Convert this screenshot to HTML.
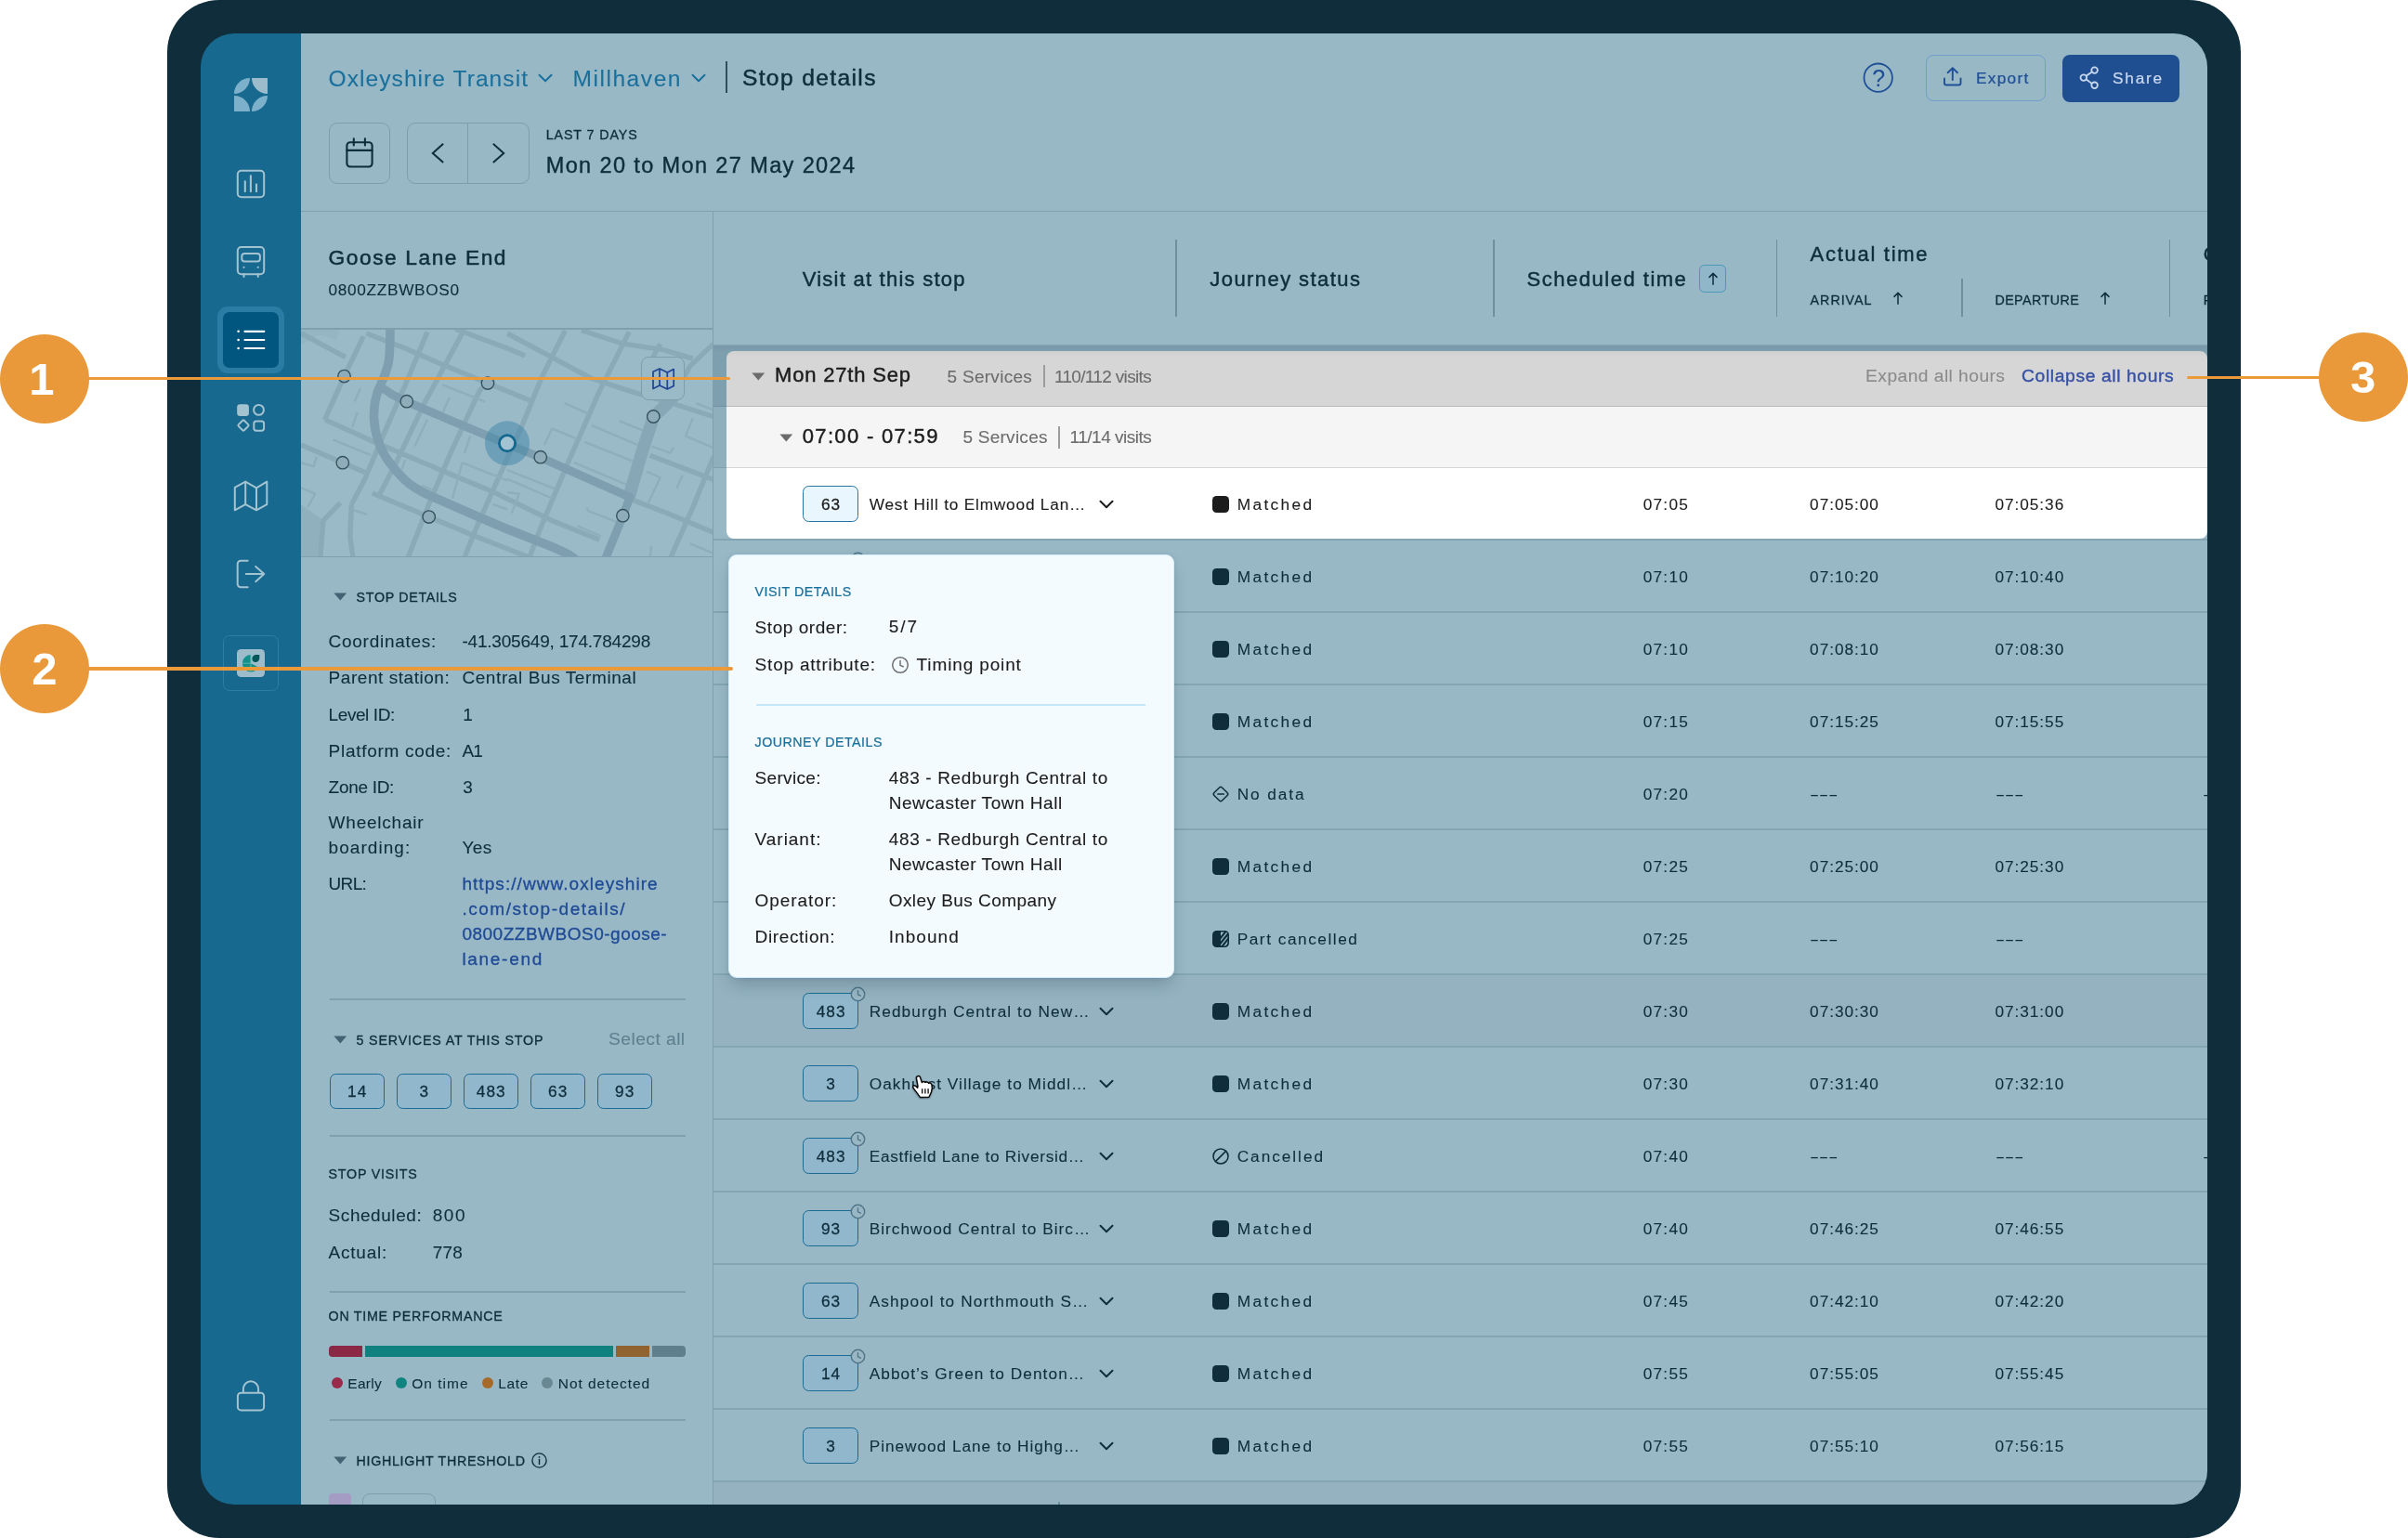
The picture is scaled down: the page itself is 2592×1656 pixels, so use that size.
<!DOCTYPE html>
<html lang="en"><head><meta charset="utf-8"><title>Stop details</title>
<style>
html,body{margin:0;padding:0;}
body{width:2592px;height:1656px;position:relative;overflow:hidden;background:#fff;font-family:'Liberation Sans',sans-serif;}
.b{position:absolute;display:block;}
.t{position:absolute;white-space:nowrap;line-height:1;font-family:'Liberation Sans',sans-serif;font-weight:400;-webkit-font-smoothing:antialiased;}
</style></head><body>
<div class="b" style="left:180px;top:0;width:2232px;height:1656px;background:#0f2d3b;border-radius:56px;"></div>
<div id="screen" class="b" style="left:0;top:0;width:2592px;height:1656px;clip-path:inset(36px 216px 36px 216px round 36px);will-change:transform;transform:translateZ(0);">
<div class="b" style="left:216.00px;top:36.00px;width:2160.00px;height:1584.00px;background:#99b8c6;"></div>
<div class="b" style="left:216.00px;top:36.00px;width:108.00px;height:1584.00px;background:#17698f;"></div>
<svg class="b" style="left:252.00px;top:84.00px;" width="36" height="36" viewBox="0 0 36 36"><path d="M17.0 0 A17.0 17.0 0 0 0 0 17.0 A17.0 17.0 0 0 0 17.0 0 Z" fill="#7db0ca"/><path d="M19.0 0 L36.0 0 L36.0 17.0 A17.0 17.0 0 0 1 19.0 0 Z" fill="#9dbccb"/><path d="M0 19.0 L0 36.0 L17.0 36.0 A17.0 17.0 0 0 0 0 19.0 Z" fill="#7db0ca"/><path d="M36.0 19.0 A17.0 17.0 0 0 0 19.0 36.0 A17.0 17.0 0 0 0 36.0 19.0 Z" fill="#7db0ca"/></svg>
<svg class="b" style="left:254.00px;top:182.00px;" width="32" height="32" viewBox="0 0 32 32"><g fill="none" stroke="#a4c3d1" stroke-width="2" stroke-linecap="round"><rect x="1.8" y="1.8" width="28.4" height="28.4" rx="4"/><path d="M9.8 13.2V24.2M15.9 7.3V24.2M22 16.6V24.2" stroke-width="2.1"/></g></svg>
<svg class="b" style="left:254.00px;top:264.00px;" width="32" height="36" viewBox="0 0 32 36"><g fill="none" stroke="#a4c3d1" stroke-width="2" stroke-linecap="round"><rect x="1.8" y="2" width="28.4" height="29.3" rx="4"/><rect x="6.3" y="9" width="19.6" height="8.4" rx="3"/><path d="M8.5 31.3V34M23.7 31.3V34"/></g><circle cx="8.5" cy="23.8" r="1.1" fill="#a4c3d1"/><circle cx="23.7" cy="23.8" r="1.1" fill="#a4c3d1"/></svg>
<div class="b" style="left:233.70px;top:330.00px;width:72.60px;height:72.30px;background:#2a7ca4;border-radius:11px;"></div>
<div class="b" style="left:239.70px;top:336.00px;width:60.40px;height:60.20px;background:#00567f;border-radius:7px;"></div>
<svg class="b" style="left:250.00px;top:350.00px;" width="40" height="32" viewBox="0 0 40 32"><g stroke="#fff" stroke-width="2.2" stroke-linecap="round"><path d="M13.5 6.8H34.3M13.5 16H34.3M13.5 25H34.3"/><path d="M6.6 6.8h0.01M6.6 16h0.01M6.6 25h0.01" stroke-width="2.6"/></g></svg>
<svg class="b" style="left:253.00px;top:433.00px;" width="34" height="34" viewBox="0 0 34 34"><rect x="2.2" y="2.3" width="12.7" height="12.7" rx="3.2" fill="#a4c3d1"/><g fill="none" stroke="#a4c3d1" stroke-width="2"><circle cx="25.5" cy="8.4" r="5.4"/><rect x="-4.3" y="-4.3" width="8.6" height="8.6" rx="1.2" transform="translate(9 25) rotate(45)"/><rect x="20.3" y="20.4" width="10.8" height="10.3" rx="2.6"/></g></svg>
<svg class="b" style="left:250.00px;top:515.00px;" width="40" height="38" viewBox="0 0 40 38"><g fill="none" stroke="#a4c3d1" stroke-width="2" stroke-linejoin="round"><path d="M2.8 9.8L14.2 3.6L26 10.3L37.3 3.6V28.1L26 34.3L14.2 28.1L2.8 34.3Z"/><path d="M14.2 3.6V28.1M26 10.3V34.3"/></g></svg>
<svg class="b" style="left:252.00px;top:600.00px;" width="36" height="36" viewBox="0 0 36 36"><g fill="none" stroke="#a4c3d1" stroke-width="2" stroke-linecap="round" stroke-linejoin="round"><path d="M14.7 3.8H7.2A3.5 3.5 0 0 0 3.7 7.3V28.8A3.5 3.5 0 0 0 7.2 32.3H14.7"/><path d="M12.8 18H32.3M23.2 9.9L32.3 18L23.2 26.2"/></g></svg>
<div class="b" style="left:240.00px;top:684.00px;width:60.00px;height:59.50px;border-radius:7px;border:1px solid #2d7da5;box-sizing:border-box;"></div>
<div class="b" style="left:255.00px;top:698.70px;width:30.20px;height:30.20px;background:#9cbccb;border-radius:4.5px;"></div>
<svg class="b" style="left:255.00px;top:698.70px;" width="30.2" height="30.2" viewBox="0 0 30.2 30.2"><path d="M15 6.100A9.200 9.200 0 1 0 23.300 19.400L15 15.200Z" fill="#12918b"/><path d="M16.400 10.200A4.200 4.200 0 0 1 20.600 6H24.300V9.700A4.200 4.200 0 0 1 20.100 13.900A3.700 3.700 0 0 1 16.400 10.200Z" fill="#03575a"/><path d="M14.900 6.100V24.400M5.800 15.200H14.900" stroke="#6dbdb6" stroke-width="0.8"/></svg>
<svg class="b" style="left:253.00px;top:1485.00px;" width="34" height="36" viewBox="0 0 34 36"><g fill="none" stroke="#a4c3d1" stroke-width="2"><rect x="2.9" y="14.8" width="28.2" height="18.6" rx="3.5"/><path d="M8.9 14.8V10.4A8.1 8.1 0 0 1 25.1 10.4V14.8"/></g></svg>
<span class="t" style="left:353.50px;top:73.00px;font-size:24.60px;color:#1a709c;letter-spacing:1.040px;-webkit-text-stroke:0.1px #1a709c;">Oxleyshire Transit</span>
<svg class="b" style="left:579.00px;top:79.00px;" width="16" height="10" viewBox="0 0 16 10"><path d="M1.5 1.8L8 8.2L14.5 1.8" fill="none" stroke="#1a709c" stroke-width="2" stroke-linecap="round" stroke-linejoin="round"/></svg>
<span class="t" style="left:616.40px;top:73.00px;font-size:24.60px;color:#1a709c;letter-spacing:1.533px;-webkit-text-stroke:0.1px #1a709c;">Millhaven</span>
<svg class="b" style="left:743.50px;top:79.00px;" width="16" height="10" viewBox="0 0 16 10"><path d="M1.5 1.8L8 8.2L14.5 1.8" fill="none" stroke="#1a709c" stroke-width="2" stroke-linecap="round" stroke-linejoin="round"/></svg>
<div class="b" style="left:781.30px;top:66.00px;width:1.60px;height:34.00px;background:#2f4f5e;"></div>
<span class="t" style="left:798.90px;top:72.00px;font-size:24.60px;color:#0f2d3b;letter-spacing:1.370px;-webkit-text-stroke:0.48px #0f2d3b;">Stop details</span>
<svg class="b" style="left:2003.00px;top:65.00px;" width="38" height="38" viewBox="0 0 38 38"><circle cx="18.7" cy="18.7" r="15.2" fill="none" stroke="#1f4f96" stroke-width="1.8"/></svg>
<span class="t" style="left:2015.30px;top:72.00px;font-size:25.00px;color:#1f4f96;-webkit-text-stroke:0.1px #1f4f96;">?</span>
<div class="b" style="left:2073.30px;top:58.80px;width:128.40px;height:50.40px;border-radius:8px;border:1.5px solid #6f9fcd;box-sizing:border-box;"></div>
<svg class="b" style="left:2089.00px;top:70.00px;" width="26" height="26" viewBox="0 0 26 26"><g fill="none" stroke="#1f4f96" stroke-width="1.9" stroke-linecap="round" stroke-linejoin="round"><path d="M4 14.5V19.5A2 2 0 0 0 6 21.5H19.5A2 2 0 0 0 21.5 19.5V14.5"/><path d="M12.8 16V3.6M7.6 8.3L12.8 3.2L18 8.3"/></g></svg>
<span class="t" style="left:2127.10px;top:76.00px;font-size:17.25px;color:#1f4f96;letter-spacing:1.250px;-webkit-text-stroke:0.24px #1f4f96;">Export</span>
<div class="b" style="left:2219.80px;top:58.50px;width:126.50px;height:51.00px;background:#204f91;border-radius:8px;"></div>
<svg class="b" style="left:2237.00px;top:70.00px;" width="28" height="28" viewBox="0 0 28 28"><g fill="none" stroke="#c9d9ee" stroke-width="1.8"><circle cx="17.6" cy="5.6" r="3.3"/><circle cx="5.8" cy="13.6" r="3.3"/><circle cx="17.6" cy="21.8" r="3.3"/><path d="M8.6 11.8L14.8 7.4M8.6 15.5L14.8 20"/></g></svg>
<span class="t" style="left:2274.10px;top:76.00px;font-size:17.25px;color:#c9d9ee;letter-spacing:1.761px;-webkit-text-stroke:0.24px #c9d9ee;">Share</span>
<div class="b" style="left:354.00px;top:132.00px;width:66.00px;height:66.00px;border-radius:9px;border:1px solid #7e9eac;box-sizing:border-box;"></div>
<svg class="b" style="left:368.00px;top:146.00px;" width="38" height="38" viewBox="0 0 38 38"><g fill="none" stroke="#0f2d3b" stroke-width="2.1" stroke-linecap="round"><rect x="5.4" y="7.2" width="27.2" height="26.3" rx="3.5"/><path d="M5.4 15.9H32.6M12.8 3.4V10.4M24.9 3.4V10.4"/></g></svg>
<div class="b" style="left:438.30px;top:132.00px;width:131.40px;height:66.00px;border-radius:9px;border:1px solid #7e9eac;box-sizing:border-box;"></div>
<div class="b" style="left:502.90px;top:132.00px;width:1.00px;height:66.00px;background:#7e9eac;"></div>
<svg class="b" style="left:455.00px;top:150.00px;" width="30" height="30" viewBox="0 0 30 30"><path d="M21.4 5.5L10.8 14.9L21.4 24.3" fill="none" stroke="#0f2d3b" stroke-width="2" stroke-linecap="square"/></svg>
<svg class="b" style="left:522.00px;top:150.00px;" width="30" height="30" viewBox="0 0 30 30"><path d="M9.6 5.5L20.2 14.9L9.6 24.3" fill="none" stroke="#0f2d3b" stroke-width="2" stroke-linecap="square"/></svg>
<span class="t" style="left:587.70px;top:138.00px;font-size:14.25px;color:#0f2d3b;letter-spacing:0.901px;-webkit-text-stroke:0.32px #0f2d3b;">LAST 7 DAYS</span>
<span class="t" style="left:587.70px;top:167.00px;font-size:23.50px;color:#0f2d3b;letter-spacing:1.385px;-webkit-text-stroke:0.40px #0f2d3b;">Mon 20 to Mon 27 May 2024</span>
<div class="b" style="left:324.00px;top:226.60px;width:2052.00px;height:1.40px;background:#7fa0af;"></div>
<div class="b" style="left:766.60px;top:227.00px;width:1.50px;height:1393.00px;background:#7fa0af;"></div>
<span class="t" style="left:353.50px;top:266.00px;font-size:22.75px;color:#0f2d3b;letter-spacing:1.559px;-webkit-text-stroke:0.48px #0f2d3b;">Goose Lane End</span>
<span class="t" style="left:353.50px;top:304.00px;font-size:17.25px;color:#0f2d3b;letter-spacing:0.668px;-webkit-text-stroke:0.1px #0f2d3b;">0800ZZBWBOS0</span>
<div class="b" style="left:324.00px;top:353.40px;width:443.00px;height:1.40px;background:#7fa0af;"></div>
<div class="b" style="left:324.00px;top:598.80px;width:443.00px;height:1.40px;background:#7fa0af;"></div>
<svg class="b" style="left:324.00px;top:354.80px;overflow:hidden;" width="442.6" height="244" viewBox="0 0 442.6 244"><rect width="442.6" height="244" fill="#9bbac8"/><polygon points="0.0,187.9 24.0,205.5 17.6,245.2 0.0,245.2" fill="#90b0be"/><polygon points="0.0,-0.8 41.6,-0.8 38.4,10.4 19.2,5.6 0.0,16.8" fill="#95b5c3"/><g><polyline points="70.4,4.0 112.0,20.0 150.4,36.8 200.7,57.6 246.0,76.0" fill="none" stroke="#8aaab8" stroke-width="5.4" stroke-linejoin="round" stroke-linecap="butt" /><polyline points="25.6,96.8 75.2,119.2 150.4,151.2 207.9,175.1 270.0,205.5 321.2,226.3" fill="none" stroke="#8aaab8" stroke-width="5.4" stroke-linejoin="round" stroke-linecap="butt" /><polyline points="0.0,124.0 44.8,143.2 68.8,153.6" fill="none" stroke="#8aaab8" stroke-width="5.4" stroke-linejoin="round" stroke-linecap="butt" /><polyline points="76.8,175.9 137.6,201.5 185.5,221.5 246.0,245.2" fill="none" stroke="#8aaab8" stroke-width="5.4" stroke-linejoin="round" stroke-linecap="butt" /><polyline points="0.0,4.0 48.0,29.6" fill="none" stroke="#8aaab8" stroke-width="5.4" stroke-linejoin="round" stroke-linecap="butt" /><polyline points="222.0,4.0 270.0,29.6 311.6,52.0 354.8,66.4 399.5,79.2 444.0,93.6" fill="none" stroke="#8aaab8" stroke-width="5.4" stroke-linejoin="round" stroke-linecap="butt" /><polyline points="302.0,0.8 346.8,15.2 389.9,21.6 421.9,31.2" fill="none" stroke="#8aaab8" stroke-width="5.4" stroke-linejoin="round" stroke-linecap="butt" /><polyline points="356.4,183.1 397.9,199.1 444.0,218.3" fill="none" stroke="#8aaab8" stroke-width="5.4" stroke-linejoin="round" stroke-linecap="butt" /><polyline points="375.6,135.2 444.0,161.5" fill="none" stroke="#8aaab8" stroke-width="5.4" stroke-linejoin="round" stroke-linecap="butt" /><polyline points="166.3,-0.8 222.0,20.0 241.2,28.0" fill="none" stroke="#8aaab8" stroke-width="5.4" stroke-linejoin="round" stroke-linecap="butt" /><polyline points="136.0,2.4 112.0,60.0 89.6,111.2 68.8,160.7 54.4,187.9" fill="none" stroke="#8aaab8" stroke-width="5.4" stroke-linejoin="round" stroke-linecap="butt" /><polyline points="174.3,2.4 132.8,79.2 102.4,143.2 83.2,179.9" fill="none" stroke="#8aaab8" stroke-width="5.4" stroke-linejoin="round" stroke-linecap="butt" /><polyline points="203.1,52.0 191.9,66.4 159.9,135.2 137.6,187.9 115.2,245.2" fill="none" stroke="#8aaab8" stroke-width="5.4" stroke-linejoin="round" stroke-linecap="butt" /><polyline points="67.2,7.2 46.4,50.4 25.6,96.8" fill="none" stroke="#8aaab8" stroke-width="5.4" stroke-linejoin="round" stroke-linecap="butt" /><polyline points="284.4,0.8 258.8,52.0 238.0,103.2 206.3,173.5 188.7,213.5 175.9,245.2" fill="none" stroke="#8aaab8" stroke-width="5.4" stroke-linejoin="round" stroke-linecap="butt" /><polyline points="353.2,2.4 321.2,66.4 286.0,146.4 257.2,215.1 246.0,245.2" fill="none" stroke="#8aaab8" stroke-width="5.4" stroke-linejoin="round" stroke-linecap="butt" /><polyline points="444.0,136.8 421.9,191.1 397.9,245.2" fill="none" stroke="#8aaab8" stroke-width="5.4" stroke-linejoin="round" stroke-linecap="butt" /><polyline points="386.7,15.2 375.6,36.0" fill="none" stroke="#8aaab8" stroke-width="5.4" stroke-linejoin="round" stroke-linecap="butt" /><polyline points="444.0,15.2 418.7,39.2 402.7,69.6" fill="none" stroke="#8aaab8" stroke-width="5.4" stroke-linejoin="round" stroke-linecap="butt" /><polyline points="54.4,187.9 52.8,223.1 56.0,245.2" fill="none" stroke="#8aaab8" stroke-width="5.4" stroke-linejoin="round" stroke-linecap="butt" /><polyline points="42.4,186.3 24.0,205.5 20.8,245.2" fill="none" stroke="#8aaab8" stroke-width="5.4" stroke-linejoin="round" stroke-linecap="butt" /></g><g><polyline points="64.0,63.2 57.6,77.6" fill="none" stroke="#8eaebc" stroke-width="2.4" stroke-linejoin="round" stroke-linecap="butt" /><polyline points="60.8,88.8 55.2,104.8" fill="none" stroke="#8eaebc" stroke-width="2.4" stroke-linejoin="round" stroke-linecap="butt" /><polyline points="159.9,72.8 152.8,88.8" fill="none" stroke="#8eaebc" stroke-width="2.4" stroke-linejoin="round" stroke-linecap="butt" /><polyline points="136.0,96.8 122.4,125.6" fill="none" stroke="#8eaebc" stroke-width="2.4" stroke-linejoin="round" stroke-linecap="butt" /><polyline points="152.0,59.2 198.3,77.6" fill="none" stroke="#8eaebc" stroke-width="2.4" stroke-linejoin="round" stroke-linecap="butt" /><polyline points="34.4,118.4 75.2,135.2" fill="none" stroke="#8eaebc" stroke-width="2.4" stroke-linejoin="round" stroke-linecap="butt" /><polyline points="112.0,140.0 108.8,150.4" fill="none" stroke="#8eaebc" stroke-width="2.4" stroke-linejoin="round" stroke-linecap="butt" /><polyline points="129.6,167.9 140.8,171.9" fill="none" stroke="#8eaebc" stroke-width="2.4" stroke-linejoin="round" stroke-linecap="butt" /><polyline points="54.4,193.5 71.2,199.1" fill="none" stroke="#8eaebc" stroke-width="2.4" stroke-linejoin="round" stroke-linecap="butt" /><polyline points="0.0,143.2 13.6,147.2 16.8,136.8" fill="none" stroke="#8eaebc" stroke-width="2.4" stroke-linejoin="round" stroke-linecap="butt" /><polyline points="0.0,170.3 15.2,176.7 7.2,191.1" fill="none" stroke="#8eaebc" stroke-width="2.4" stroke-linejoin="round" stroke-linecap="butt" /><polyline points="182.3,114.4 175.9,132.8" fill="none" stroke="#8eaebc" stroke-width="2.4" stroke-linejoin="round" stroke-linecap="butt" /><polyline points="173.5,143.2 222.0,162.3" fill="none" stroke="#8eaebc" stroke-width="2.4" stroke-linejoin="round" stroke-linecap="butt" /><polyline points="173.5,143.2 163.1,181.5" fill="none" stroke="#8eaebc" stroke-width="2.4" stroke-linejoin="round" stroke-linecap="butt" /><polyline points="206.3,187.9 222.0,193.5" fill="none" stroke="#8eaebc" stroke-width="2.4" stroke-linejoin="round" stroke-linecap="butt" /><polyline points="283.6,79.2 309.2,90.4" fill="none" stroke="#8eaebc" stroke-width="2.4" stroke-linejoin="round" stroke-linecap="butt" /><polyline points="270.0,106.4 262.0,124.0" fill="none" stroke="#8eaebc" stroke-width="2.4" stroke-linejoin="round" stroke-linecap="butt" /><polyline points="270.0,106.4 297.2,117.6" fill="none" stroke="#8eaebc" stroke-width="2.4" stroke-linejoin="round" stroke-linecap="butt" /><polyline points="313.2,103.2 366.0,125.6" fill="none" stroke="#8eaebc" stroke-width="2.4" stroke-linejoin="round" stroke-linecap="butt" /><polyline points="305.2,120.8 361.2,143.2" fill="none" stroke="#8eaebc" stroke-width="2.4" stroke-linejoin="round" stroke-linecap="butt" /><polyline points="294.0,143.2 354.8,168.7" fill="none" stroke="#8eaebc" stroke-width="2.4" stroke-linejoin="round" stroke-linecap="butt" /><polyline points="342.8,98.4 370.8,109.6" fill="none" stroke="#8eaebc" stroke-width="2.4" stroke-linejoin="round" stroke-linecap="butt" /><polyline points="222.0,151.2 274.8,171.9" fill="none" stroke="#8eaebc" stroke-width="2.4" stroke-linejoin="round" stroke-linecap="butt" /><polyline points="222.0,160.7 270.0,181.5" fill="none" stroke="#8eaebc" stroke-width="2.4" stroke-linejoin="round" stroke-linecap="butt" /><polyline points="222.0,175.1 234.8,176.7 226.8,197.5" fill="none" stroke="#8eaebc" stroke-width="2.4" stroke-linejoin="round" stroke-linecap="butt" /><polyline points="307.6,191.9 309.2,195.1 340.4,207.1" fill="none" stroke="#8eaebc" stroke-width="2.4" stroke-linejoin="round" stroke-linecap="butt" /><polyline points="297.2,211.1 322.8,222.3" fill="none" stroke="#8eaebc" stroke-width="2.4" stroke-linejoin="round" stroke-linecap="butt" /><polyline points="372.4,152.8 386.7,159.1 374.0,186.3" fill="none" stroke="#8eaebc" stroke-width="2.4" stroke-linejoin="round" stroke-linecap="butt" /><polyline points="410.7,156.7 404.3,171.1" fill="none" stroke="#8eaebc" stroke-width="2.4" stroke-linejoin="round" stroke-linecap="butt" /><polyline points="421.9,95.2 413.9,114.4 444.0,127.2" fill="none" stroke="#8eaebc" stroke-width="2.4" stroke-linejoin="round" stroke-linecap="butt" /><polyline points="377.2,125.6 397.9,132.8 401.1,126.4" fill="none" stroke="#8eaebc" stroke-width="2.4" stroke-linejoin="round" stroke-linecap="butt" /><polyline points="425.1,79.2 444.0,86.4" fill="none" stroke="#8eaebc" stroke-width="2.4" stroke-linejoin="round" stroke-linecap="butt" /><polyline points="418.7,230.3 444.0,240.7" fill="none" stroke="#8eaebc" stroke-width="2.4" stroke-linejoin="round" stroke-linecap="butt" /><polyline points="377.2,232.7 375.6,245.2" fill="none" stroke="#8eaebc" stroke-width="2.4" stroke-linejoin="round" stroke-linecap="butt" /></g><polyline points="402.7,69.6 391.5,82.4 379.5,93.6 366.0,135.2 353.2,179.9" fill="none" stroke="#87a7b6" stroke-width="13.5" stroke-linejoin="round" stroke-linecap="butt" /><path d="M96.0 -4.0 Q96.0 28.0 93.7 37.6 Q91.5 47.2 86.7 56.8 Q81.9 66.4 80.0 76.0 Q78.1 85.6 78.6 96.8 Q79.2 108.0 83.2 120.0 Q87.2 132.0 94.8 142.4 Q102.4 152.8 112.0 161.9 Q121.6 171.1 140.8 179.5 Q159.9 187.9 191.0 201.5 Q222.0 215.1 253.2 227.1 Q284.4 239.1 290.8 243.9 L297.2 248.7" fill="none" stroke="#7e9faf" stroke-width="9.6"/><polyline points="87.2,62.4 99.2,70.4 113.6,77.3 159.9,97.1 222.0,123.2 258.0,137.6 354.0,180.3 346.8,199.9 326.8,248.7" fill="none" stroke="#7e9faf" stroke-width="9" stroke-linejoin="round" stroke-linecap="butt" /><circle cx="46.5" cy="50.1" r="6.7" fill="#8eacb9" stroke="#36525f" stroke-width="1.4"/><circle cx="113.8" cy="77.2" r="6.7" fill="#8eacb9" stroke="#36525f" stroke-width="1.4"/><circle cx="201.0" cy="57.6" r="6.7" fill="#8eacb9" stroke="#36525f" stroke-width="1.4"/><circle cx="44.8" cy="143.2" r="6.7" fill="#8eacb9" stroke="#36525f" stroke-width="1.4"/><circle cx="137.7" cy="201.6" r="6.7" fill="#8eacb9" stroke="#36525f" stroke-width="1.4"/><circle cx="257.8" cy="137.2" r="6.7" fill="#8eacb9" stroke="#36525f" stroke-width="1.4"/><circle cx="379.3" cy="93.5" r="6.7" fill="#8eacb9" stroke="#36525f" stroke-width="1.4"/><circle cx="346.4" cy="200.2" r="6.7" fill="#8eacb9" stroke="#36525f" stroke-width="1.4"/><circle cx="222.0" cy="122.3" r="24" fill="#3f86a8" fill-opacity="0.5"/><circle cx="222.0" cy="122.3" r="8.6" fill="#a3c3d2" stroke="#14688f" stroke-width="2.8"/></svg>
<div class="b" style="left:690.40px;top:384.20px;width:47.00px;height:47.30px;background:#9bbac8;border-radius:8px;border:1px solid #7e9eac;box-sizing:border-box;"></div>
<svg class="b" style="left:699.00px;top:393.00px;" width="30" height="30" viewBox="0 0 30 30"><g fill="none" stroke="#1f4494" stroke-width="1.7" stroke-linejoin="round"><path d="M4 7.3L11 4L19.3 8L26.2 4.6V22.6L19.3 26L11 22L4 25.4Z"/><path d="M11 4V22M19.3 8V26"/></g></svg>
<svg class="b" style="left:358.80px;top:638.00px;" width="15" height="9" viewBox="0 0 15 9"><path d="M0.4 0.6H14.2L7.3 8.6Z" fill="#426373"/></svg>
<span class="t" style="left:383.60px;top:636.00px;font-size:14.25px;color:#0f2d3b;letter-spacing:0.681px;-webkit-text-stroke:0.32px #0f2d3b;">STOP DETAILS</span>
<span class="t" style="left:353.60px;top:681.00px;font-size:19.00px;color:#0f2d3b;letter-spacing:0.725px;-webkit-text-stroke:0.1px #0f2d3b;">Coordinates:</span>
<span class="t" style="left:497.40px;top:681.00px;font-size:19.00px;color:#0f2d3b;letter-spacing:-0.200px;-webkit-text-stroke:0.1px #0f2d3b;">-41.305649, 174.784298</span>
<span class="t" style="left:353.60px;top:720.00px;font-size:19.00px;color:#0f2d3b;letter-spacing:0.546px;-webkit-text-stroke:0.1px #0f2d3b;">Parent station:</span>
<span class="t" style="left:497.40px;top:720.00px;font-size:19.00px;color:#0f2d3b;letter-spacing:0.598px;-webkit-text-stroke:0.1px #0f2d3b;">Central Bus Terminal</span>
<span class="t" style="left:353.60px;top:760.00px;font-size:19.00px;color:#0f2d3b;letter-spacing:-0.419px;-webkit-text-stroke:0.1px #0f2d3b;">Level ID:</span>
<span class="t" style="left:498.30px;top:760.00px;font-size:19.00px;color:#0f2d3b;-webkit-text-stroke:0.1px #0f2d3b;">1</span>
<span class="t" style="left:353.60px;top:799.00px;font-size:19.00px;color:#0f2d3b;letter-spacing:0.703px;-webkit-text-stroke:0.1px #0f2d3b;">Platform code:</span>
<span class="t" style="left:497.40px;top:799.00px;font-size:19.00px;color:#0f2d3b;letter-spacing:-0.700px;-webkit-text-stroke:0.1px #0f2d3b;">A1</span>
<span class="t" style="left:353.60px;top:838.00px;font-size:19.00px;color:#0f2d3b;letter-spacing:-0.295px;-webkit-text-stroke:0.1px #0f2d3b;">Zone ID:</span>
<span class="t" style="left:498.30px;top:838.00px;font-size:19.00px;color:#0f2d3b;-webkit-text-stroke:0.1px #0f2d3b;">3</span>
<span class="t" style="left:353.60px;top:876.00px;font-size:19.00px;color:#0f2d3b;letter-spacing:0.778px;-webkit-text-stroke:0.1px #0f2d3b;">Wheelchair</span>
<span class="t" style="left:353.60px;top:903.00px;font-size:19.00px;color:#0f2d3b;letter-spacing:1.046px;-webkit-text-stroke:0.1px #0f2d3b;">boarding:</span>
<span class="t" style="left:497.40px;top:903.00px;font-size:19.00px;color:#0f2d3b;letter-spacing:0.415px;-webkit-text-stroke:0.1px #0f2d3b;">Yes</span>
<span class="t" style="left:353.60px;top:942.00px;font-size:19.00px;color:#0f2d3b;letter-spacing:-0.700px;-webkit-text-stroke:0.1px #0f2d3b;">URL:</span>
<span class="t" style="left:497.40px;top:942.00px;font-size:19.00px;color:#1f4a96;letter-spacing:1.062px;-webkit-text-stroke:0.32px #1f4a96;">https://www.oxleyshire</span>
<span class="t" style="left:497.40px;top:969.00px;font-size:19.00px;color:#1f4a96;letter-spacing:1.544px;-webkit-text-stroke:0.32px #1f4a96;">.com/stop-details/</span>
<span class="t" style="left:497.40px;top:996.00px;font-size:19.00px;color:#1f4a96;letter-spacing:0.506px;-webkit-text-stroke:0.32px #1f4a96;">0800ZZBWBOS0-goose-</span>
<span class="t" style="left:497.40px;top:1023.00px;font-size:19.00px;color:#1f4a96;letter-spacing:1.699px;-webkit-text-stroke:0.32px #1f4a96;">lane-end</span>
<div class="b" style="left:354.50px;top:1075.30px;width:383.30px;height:1.50px;background:#7fa0af;"></div>
<svg class="b" style="left:359.40px;top:1115.00px;" width="15" height="9" viewBox="0 0 15 9"><path d="M0.4 0.6H14.2L7.3 8.6Z" fill="#426373"/></svg>
<span class="t" style="left:383.50px;top:1113.00px;font-size:14.25px;color:#0f2d3b;letter-spacing:0.845px;-webkit-text-stroke:0.32px #0f2d3b;">5 SERVICES AT THIS STOP</span>
<span class="t" style="left:655.10px;top:1109.00px;font-size:19.25px;color:#5e8191;letter-spacing:0.438px;-webkit-text-stroke:0.1px #5e8191;">Select all</span>
<div class="b" style="left:354.50px;top:1155.50px;width:59.40px;height:38.00px;background:#90b7cb;border-radius:6.5px;border:1.8px solid #1a6a93;box-sizing:border-box;"></div>
<span class="t" style="left:374.11px;top:1167.00px;font-size:17.25px;color:#0f2d3b;letter-spacing:1.000px;-webkit-text-stroke:0.28px #0f2d3b;">14</span>
<div class="b" style="left:426.50px;top:1155.50px;width:59.40px;height:38.00px;background:#90b7cb;border-radius:6.5px;border:1.8px solid #1a6a93;box-sizing:border-box;"></div>
<span class="t" style="left:451.40px;top:1167.00px;font-size:17.25px;color:#0f2d3b;letter-spacing:1.000px;-webkit-text-stroke:0.28px #0f2d3b;">3</span>
<div class="b" style="left:498.50px;top:1155.50px;width:59.40px;height:38.00px;background:#90b7cb;border-radius:6.5px;border:1.8px solid #1a6a93;box-sizing:border-box;"></div>
<span class="t" style="left:512.81px;top:1167.00px;font-size:17.25px;color:#0f2d3b;letter-spacing:1.000px;-webkit-text-stroke:0.28px #0f2d3b;">483</span>
<div class="b" style="left:570.50px;top:1155.50px;width:59.40px;height:38.00px;background:#90b7cb;border-radius:6.5px;border:1.8px solid #1a6a93;box-sizing:border-box;"></div>
<span class="t" style="left:590.11px;top:1167.00px;font-size:17.25px;color:#0f2d3b;letter-spacing:1.000px;-webkit-text-stroke:0.28px #0f2d3b;">63</span>
<div class="b" style="left:642.50px;top:1155.50px;width:59.40px;height:38.00px;background:#90b7cb;border-radius:6.5px;border:1.8px solid #1a6a93;box-sizing:border-box;"></div>
<span class="t" style="left:662.11px;top:1167.00px;font-size:17.25px;color:#0f2d3b;letter-spacing:1.000px;-webkit-text-stroke:0.28px #0f2d3b;">93</span>
<div class="b" style="left:354.50px;top:1222.30px;width:383.30px;height:1.50px;background:#7fa0af;"></div>
<span class="t" style="left:353.60px;top:1257.00px;font-size:14.25px;color:#0f2d3b;letter-spacing:0.775px;-webkit-text-stroke:0.32px #0f2d3b;">STOP VISITS</span>
<span class="t" style="left:353.60px;top:1299.00px;font-size:19.00px;color:#0f2d3b;letter-spacing:0.556px;-webkit-text-stroke:0.1px #0f2d3b;">Scheduled:</span>
<span class="t" style="left:465.70px;top:1299.00px;font-size:19.00px;color:#0f2d3b;letter-spacing:1.535px;-webkit-text-stroke:0.1px #0f2d3b;">800</span>
<span class="t" style="left:353.60px;top:1339.00px;font-size:19.00px;color:#0f2d3b;letter-spacing:0.759px;-webkit-text-stroke:0.1px #0f2d3b;">Actual:</span>
<span class="t" style="left:465.70px;top:1339.00px;font-size:19.00px;color:#0f2d3b;letter-spacing:0.185px;-webkit-text-stroke:0.1px #0f2d3b;">778</span>
<div class="b" style="left:354.50px;top:1390.20px;width:383.30px;height:1.50px;background:#7fa0af;"></div>
<span class="t" style="left:353.60px;top:1410.00px;font-size:14.25px;color:#0f2d3b;letter-spacing:0.732px;-webkit-text-stroke:0.32px #0f2d3b;">ON TIME PERFORMANCE</span>
<div class="b" style="left:354.30px;top:1449.00px;width:35.70px;height:12.00px;background:#8a2846;border-radius:4px 0 0 4px;"></div>
<div class="b" style="left:393.10px;top:1449.00px;width:267.00px;height:12.00px;background:#0f827f;"></div>
<div class="b" style="left:663.00px;top:1449.00px;width:36.00px;height:12.00px;background:#8f6430;"></div>
<div class="b" style="left:701.90px;top:1449.00px;width:35.90px;height:12.00px;background:#5f7f8d;border-radius:0 4px 4px 0;"></div>
<div class="b" style="left:356.80px;top:1483.10px;width:12.40px;height:12.40px;background:#9a2a4a;border-radius:7px;"></div>
<span class="t" style="left:374.30px;top:1482.00px;font-size:15.50px;color:#0f2d3b;letter-spacing:0.265px;-webkit-text-stroke:0.1px #0f2d3b;">Early</span>
<div class="b" style="left:425.60px;top:1483.10px;width:12.40px;height:12.40px;background:#10857f;border-radius:7px;"></div>
<span class="t" style="left:443.30px;top:1482.00px;font-size:15.50px;color:#0f2d3b;letter-spacing:0.992px;-webkit-text-stroke:0.1px #0f2d3b;">On time</span>
<div class="b" style="left:518.80px;top:1483.10px;width:12.40px;height:12.40px;background:#a56a2a;border-radius:7px;"></div>
<span class="t" style="left:536.30px;top:1482.00px;font-size:15.50px;color:#0f2d3b;letter-spacing:0.617px;-webkit-text-stroke:0.1px #0f2d3b;">Late</span>
<div class="b" style="left:583.00px;top:1483.10px;width:12.40px;height:12.40px;background:#6a8794;border-radius:7px;"></div>
<span class="t" style="left:600.80px;top:1482.00px;font-size:15.50px;color:#0f2d3b;letter-spacing:0.947px;-webkit-text-stroke:0.1px #0f2d3b;">Not detected</span>
<div class="b" style="left:354.50px;top:1528.30px;width:383.30px;height:1.50px;background:#7fa0af;"></div>
<svg class="b" style="left:359.40px;top:1568.00px;" width="15" height="9" viewBox="0 0 15 9"><path d="M0.4 0.6H14.2L7.3 8.6Z" fill="#426373"/></svg>
<span class="t" style="left:383.50px;top:1566.00px;font-size:14.25px;color:#0f2d3b;letter-spacing:0.698px;-webkit-text-stroke:0.32px #0f2d3b;">HIGHLIGHT THRESHOLD</span>
<svg class="b" style="left:571.00px;top:1562.50px;" width="20" height="20" viewBox="0 0 20 20"><circle cx="9.5" cy="9.5" r="7.6" fill="none" stroke="#0f2d3b" stroke-width="1.4"/><path d="M9.5 8.6V13.4" stroke="#0f2d3b" stroke-width="1.5" stroke-linecap="round"/><circle cx="9.5" cy="5.9" r="0.95" fill="#0f2d3b"/></svg>
<div class="b" style="left:354.30px;top:1608.00px;width:23.70px;height:24.00px;background:#a59cc4;border-radius:4px;"></div>
<div class="b" style="left:390.10px;top:1608.00px;width:79.00px;height:30.00px;border-radius:8px;border:1px solid #7e9eac;box-sizing:border-box;"></div>
<span class="t" style="left:863.70px;top:290.00px;font-size:22.00px;color:#0f2d3b;letter-spacing:1.243px;-webkit-text-stroke:0.44px #0f2d3b;">Visit at this stop</span>
<span class="t" style="left:1302.30px;top:290.00px;font-size:22.00px;color:#0f2d3b;letter-spacing:1.430px;-webkit-text-stroke:0.44px #0f2d3b;">Journey status</span>
<span class="t" style="left:1643.60px;top:290.00px;font-size:22.00px;color:#0f2d3b;letter-spacing:1.508px;-webkit-text-stroke:0.44px #0f2d3b;">Scheduled time</span>
<span class="t" style="left:1948.60px;top:263.00px;font-size:22.00px;color:#0f2d3b;letter-spacing:1.711px;-webkit-text-stroke:0.44px #0f2d3b;">Actual time</span>
<span class="t" style="left:2371.80px;top:263.00px;font-size:22.00px;color:#0f2d3b;letter-spacing:0.800px;-webkit-text-stroke:0.44px #0f2d3b;">Observed</span>
<span class="t" style="left:1948.60px;top:316.00px;font-size:14.25px;color:#0f2d3b;letter-spacing:0.996px;-webkit-text-stroke:0.32px #0f2d3b;">ARRIVAL</span>
<span class="t" style="left:2147.40px;top:316.00px;font-size:14.25px;color:#0f2d3b;letter-spacing:0.466px;-webkit-text-stroke:0.32px #0f2d3b;">DEPARTURE</span>
<span class="t" style="left:2371.80px;top:316.00px;font-size:14.25px;color:#0f2d3b;letter-spacing:1.200px;-webkit-text-stroke:0.32px #0f2d3b;">PASSENGERS</span>
<div class="b" style="left:1265.25px;top:258.00px;width:1.50px;height:83.40px;background:#6f909f;"></div>
<div class="b" style="left:1607.25px;top:258.00px;width:1.50px;height:83.40px;background:#6f909f;"></div>
<div class="b" style="left:1911.85px;top:258.00px;width:1.50px;height:83.40px;background:#6f909f;"></div>
<div class="b" style="left:2334.75px;top:258.00px;width:1.50px;height:83.40px;background:#6f909f;"></div>
<div class="b" style="left:2111.25px;top:300.00px;width:1.50px;height:41.40px;background:#6f909f;"></div>
<div class="b" style="left:1829.00px;top:285.30px;width:29.30px;height:29.40px;background:#8fb6c9;border-radius:5.5px;border:1.5px solid #4b96b9;box-sizing:border-box;"></div>
<svg class="b" style="left:1837.60px;top:291.50px;" width="12" height="16" viewBox="0 0 12 16"><path d="M6 14.2V2.6M2 6.4L6 2.4L10 6.4" fill="none" stroke="#0f2d3b" stroke-width="1.5" stroke-linecap="round" stroke-linejoin="round"/></svg>
<svg class="b" style="left:2037.00px;top:313.00px;" width="12" height="16" viewBox="0 0 12 16"><path d="M6 14.2V2.6M2 6.4L6 2.4L10 6.4" fill="none" stroke="#0f2d3b" stroke-width="1.5" stroke-linecap="round" stroke-linejoin="round"/></svg>
<svg class="b" style="left:2260.40px;top:313.00px;" width="12" height="16" viewBox="0 0 12 16"><path d="M6 14.2V2.6M2 6.4L6 2.4L10 6.4" fill="none" stroke="#0f2d3b" stroke-width="1.5" stroke-linecap="round" stroke-linejoin="round"/></svg>
<div class="b" style="left:768.00px;top:371.40px;width:1609.00px;height:66.60px;background:linear-gradient(#86a7b6 0,#7899a9 2px,#7d9fae 8px);"></div>
<div class="b" style="left:768.00px;top:436.60px;width:16.00px;height:1.50px;background:#6f93a3;"></div>
<div class="b" style="left:768.00px;top:438.00px;width:16.00px;height:65.30px;background:#90afbd;"></div>
<div class="b" style="left:768.00px;top:580.00px;width:1609.00px;height:2.00px;background:#84a5b4;"></div>
<div class="b" style="left:768.00px;top:658.00px;width:1609.00px;height:2.00px;background:#84a5b4;"></div>
<div class="b" style="left:768.00px;top:736.00px;width:1609.00px;height:2.00px;background:#84a5b4;"></div>
<div class="b" style="left:768.00px;top:814.00px;width:1609.00px;height:2.00px;background:#84a5b4;"></div>
<div class="b" style="left:768.00px;top:892.00px;width:1609.00px;height:2.00px;background:#84a5b4;"></div>
<div class="b" style="left:768.00px;top:970.00px;width:1609.00px;height:2.00px;background:#84a5b4;"></div>
<div class="b" style="left:768.00px;top:1048.00px;width:1609.00px;height:2.00px;background:#84a5b4;"></div>
<div class="b" style="left:768.00px;top:1126.00px;width:1609.00px;height:2.00px;background:#84a5b4;"></div>
<div class="b" style="left:768.00px;top:1204.00px;width:1609.00px;height:2.00px;background:#84a5b4;"></div>
<div class="b" style="left:768.00px;top:1282.00px;width:1609.00px;height:2.00px;background:#84a5b4;"></div>
<div class="b" style="left:768.00px;top:1360.00px;width:1609.00px;height:2.00px;background:#84a5b4;"></div>
<div class="b" style="left:768.00px;top:1438.00px;width:1609.00px;height:2.00px;background:#84a5b4;"></div>
<div class="b" style="left:768.00px;top:1516.00px;width:1609.00px;height:2.00px;background:#84a5b4;"></div>
<div class="b" style="left:768.00px;top:1594.00px;width:1609.00px;height:2.00px;background:#84a5b4;"></div>
<div class="b" style="left:768.00px;top:1672.00px;width:1609.00px;height:2.00px;background:#84a5b4;"></div>
<div class="b" style="left:768.00px;top:502.50px;width:16.00px;height:1.60px;background:#7e9fae;"></div>
<div class="b" style="left:768.00px;top:1050.10px;width:1609.00px;height:76.40px;background:#94b2c0;"></div>
<div class="b" style="left:768.00px;top:1596.10px;width:1609.00px;height:40.00px;background:#94b2c0;"></div>
<div class="b" style="left:782.20px;top:378.20px;width:1594.00px;height:58.60px;background:linear-gradient(#d0d0d0 0,#d6d6d6 6px);border-radius:8px 8px 0 0;"></div>
<div class="b" style="left:782.20px;top:436.60px;width:1594.00px;height:1.50px;background:#b9b9b9;"></div>
<div class="b" style="left:782.20px;top:438.00px;width:1594.00px;height:65.40px;background:#f5f5f5;"></div>
<div class="b" style="left:782.20px;top:502.60px;width:1594.00px;height:1.50px;background:#d4d4d4;"></div>
<div class="b" style="left:782.20px;top:504.00px;width:1594.00px;height:76.30px;background:#ffffff;border-radius:0 0 8px 8px;"></div>
<svg class="b" style="left:808.60px;top:400.80px;" width="15" height="9" viewBox="0 0 15 9"><path d="M0.4 0.6H14.2L7.3 8.6Z" fill="#6b6b6b"/></svg>
<span class="t" style="left:834.10px;top:393.00px;font-size:22.00px;color:#1c1c1c;letter-spacing:0.814px;-webkit-text-stroke:0.44px #1c1c1c;">Mon 27th Sep</span>
<span class="t" style="left:1019.50px;top:396.00px;font-size:19.00px;color:#6c6c6c;letter-spacing:0.286px;-webkit-text-stroke:0.1px #6c6c6c;">5 Services</span>
<div class="b" style="left:1123.00px;top:393.00px;width:1.50px;height:23.70px;background:#9c9c9c;"></div>
<span class="t" style="left:1134.90px;top:396.00px;font-size:19.00px;color:#6c6c6c;letter-spacing:-0.657px;-webkit-text-stroke:0.1px #6c6c6c;">110/112 visits</span>
<span class="t" style="left:2008.10px;top:395.00px;font-size:19.25px;color:#8b8b8b;letter-spacing:0.433px;-webkit-text-stroke:0.1px #8b8b8b;">Expand all hours</span>
<span class="t" style="left:2176.10px;top:395.00px;font-size:19.25px;color:#3651a5;letter-spacing:0.621px;-webkit-text-stroke:0.40px #3651a5;">Collapse all hours</span>
<svg class="b" style="left:839.00px;top:466.80px;" width="15" height="9" viewBox="0 0 15 9"><path d="M0.4 0.6H14.2L7.3 8.6Z" fill="#6b6b6b"/></svg>
<span class="t" style="left:863.80px;top:459.00px;font-size:22.00px;color:#1c1c1c;letter-spacing:1.326px;-webkit-text-stroke:0.44px #1c1c1c;">07:00 - 07:59</span>
<span class="t" style="left:1036.40px;top:461.00px;font-size:19.00px;color:#6c6c6c;letter-spacing:0.263px;-webkit-text-stroke:0.1px #6c6c6c;">5 Services</span>
<div class="b" style="left:1139.30px;top:459.00px;width:1.50px;height:24.00px;background:#9c9c9c;"></div>
<span class="t" style="left:1151.60px;top:461.00px;font-size:19.00px;color:#6c6c6c;letter-spacing:-0.506px;-webkit-text-stroke:0.1px #6c6c6c;">11/14 visits</span>
<div class="b" style="left:864.10px;top:523.20px;width:59.60px;height:39.20px;background:#eaf6fd;border-radius:6.5px;border:1.9px solid #2675a0;box-sizing:border-box;"></div>
<span class="t" style="left:883.96px;top:535.00px;font-size:17.25px;color:#1c1c1c;letter-spacing:1.000px;-webkit-text-stroke:0.28px #1c1c1c;">63</span>
<span class="t" style="left:935.70px;top:535.00px;font-size:17.25px;color:#1c1c1c;letter-spacing:0.797px;-webkit-text-stroke:0.1px #1c1c1c;">West Hill to Elmwood Lan…</span>
<svg class="b" style="left:1183.00px;top:537.90px;" width="16" height="10" viewBox="0 0 16 10"><path d="M1.5 1.8L8 8.2L14.5 1.8" fill="none" stroke="#1c1c1c" stroke-width="2" stroke-linecap="round" stroke-linejoin="round"/></svg>
<div class="b" style="left:1305.00px;top:533.90px;width:18.00px;height:18.00px;background:#1c1c1c;border-radius:4.5px;"></div>
<span class="t" style="left:1331.70px;top:535.00px;font-size:17.25px;color:#1c1c1c;letter-spacing:2.374px;-webkit-text-stroke:0.1px #1c1c1c;">Matched</span>
<span class="t" style="left:1768.70px;top:535.00px;font-size:17.25px;color:#1c1c1c;letter-spacing:1.247px;-webkit-text-stroke:0.1px #1c1c1c;">07:05</span>
<span class="t" style="left:1948.10px;top:535.00px;font-size:17.25px;color:#1c1c1c;letter-spacing:0.944px;-webkit-text-stroke:0.1px #1c1c1c;">07:05:00</span>
<span class="t" style="left:2147.40px;top:535.00px;font-size:17.25px;color:#1c1c1c;letter-spacing:0.959px;-webkit-text-stroke:0.1px #1c1c1c;">07:05:36</span>
<div class="b" style="left:864.10px;top:601.30px;width:59.60px;height:39.20px;background:#90b7cb;border-radius:6.5px;border:1.8px solid #1a6a93;box-sizing:border-box;"></div>
<span class="t" style="left:878.76px;top:613.00px;font-size:17.25px;color:#0f2d3b;letter-spacing:1.000px;-webkit-text-stroke:0.28px #0f2d3b;">483</span>
<svg class="b" style="left:914.90px;top:593.60px;" width="17" height="17" viewBox="0 0 17 17"><circle cx="8.5" cy="8.5" r="7.2" fill="#98b6c4" stroke="#507587" stroke-width="1.4"/><path d="M8.5 4.6V8.8L11.3 10.2" fill="none" stroke="#507587" stroke-width="1.3" stroke-linecap="round" stroke-linejoin="round"/></svg>
<span class="t" style="left:935.70px;top:613.00px;font-size:17.25px;color:#0f2d3b;letter-spacing:1.086px;-webkit-text-stroke:0.1px #0f2d3b;">Redburgh Central to New…</span>
<svg class="b" style="left:1183.00px;top:616.00px;" width="16" height="10" viewBox="0 0 16 10"><path d="M1.5 1.8L8 8.2L14.5 1.8" fill="none" stroke="#0f2d3b" stroke-width="2" stroke-linecap="round" stroke-linejoin="round"/></svg>
<div class="b" style="left:1305.00px;top:612.00px;width:18.00px;height:18.00px;background:#0f2d3b;border-radius:4.5px;"></div>
<span class="t" style="left:1331.70px;top:613.00px;font-size:17.25px;color:#0f2d3b;letter-spacing:2.374px;-webkit-text-stroke:0.1px #0f2d3b;">Matched</span>
<span class="t" style="left:1768.70px;top:613.00px;font-size:17.25px;color:#0f2d3b;letter-spacing:1.247px;-webkit-text-stroke:0.1px #0f2d3b;">07:10</span>
<span class="t" style="left:1948.10px;top:613.00px;font-size:17.25px;color:#0f2d3b;letter-spacing:0.944px;-webkit-text-stroke:0.1px #0f2d3b;">07:10:20</span>
<span class="t" style="left:2147.40px;top:613.00px;font-size:17.25px;color:#0f2d3b;letter-spacing:0.959px;-webkit-text-stroke:0.1px #0f2d3b;">07:10:40</span>
<div class="b" style="left:864.10px;top:679.30px;width:59.60px;height:39.20px;background:#90b7cb;border-radius:6.5px;border:1.8px solid #1a6a93;box-sizing:border-box;"></div>
<span class="t" style="left:883.96px;top:691.00px;font-size:17.25px;color:#0f2d3b;letter-spacing:1.000px;-webkit-text-stroke:0.28px #0f2d3b;">14</span>
<span class="t" style="left:935.70px;top:691.00px;font-size:17.25px;color:#0f2d3b;letter-spacing:1.068px;-webkit-text-stroke:0.1px #0f2d3b;">Abbot’s Green to Denton…</span>
<svg class="b" style="left:1183.00px;top:694.00px;" width="16" height="10" viewBox="0 0 16 10"><path d="M1.5 1.8L8 8.2L14.5 1.8" fill="none" stroke="#0f2d3b" stroke-width="2" stroke-linecap="round" stroke-linejoin="round"/></svg>
<div class="b" style="left:1305.00px;top:690.00px;width:18.00px;height:18.00px;background:#0f2d3b;border-radius:4.5px;"></div>
<span class="t" style="left:1331.70px;top:691.00px;font-size:17.25px;color:#0f2d3b;letter-spacing:2.374px;-webkit-text-stroke:0.1px #0f2d3b;">Matched</span>
<span class="t" style="left:1768.70px;top:691.00px;font-size:17.25px;color:#0f2d3b;letter-spacing:1.247px;-webkit-text-stroke:0.1px #0f2d3b;">07:10</span>
<span class="t" style="left:1948.10px;top:691.00px;font-size:17.25px;color:#0f2d3b;letter-spacing:0.944px;-webkit-text-stroke:0.1px #0f2d3b;">07:08:10</span>
<span class="t" style="left:2147.40px;top:691.00px;font-size:17.25px;color:#0f2d3b;letter-spacing:0.959px;-webkit-text-stroke:0.1px #0f2d3b;">07:08:30</span>
<div class="b" style="left:864.10px;top:757.30px;width:59.60px;height:39.20px;background:#90b7cb;border-radius:6.5px;border:1.8px solid #1a6a93;box-sizing:border-box;"></div>
<span class="t" style="left:883.96px;top:769.00px;font-size:17.25px;color:#0f2d3b;letter-spacing:1.000px;-webkit-text-stroke:0.28px #0f2d3b;">93</span>
<span class="t" style="left:935.70px;top:769.00px;font-size:17.25px;color:#0f2d3b;letter-spacing:1.027px;-webkit-text-stroke:0.1px #0f2d3b;">Birchwood Central to Birc…</span>
<svg class="b" style="left:1183.00px;top:772.00px;" width="16" height="10" viewBox="0 0 16 10"><path d="M1.5 1.8L8 8.2L14.5 1.8" fill="none" stroke="#0f2d3b" stroke-width="2" stroke-linecap="round" stroke-linejoin="round"/></svg>
<div class="b" style="left:1305.00px;top:768.00px;width:18.00px;height:18.00px;background:#0f2d3b;border-radius:4.5px;"></div>
<span class="t" style="left:1331.70px;top:769.00px;font-size:17.25px;color:#0f2d3b;letter-spacing:2.374px;-webkit-text-stroke:0.1px #0f2d3b;">Matched</span>
<span class="t" style="left:1768.70px;top:769.00px;font-size:17.25px;color:#0f2d3b;letter-spacing:1.247px;-webkit-text-stroke:0.1px #0f2d3b;">07:15</span>
<span class="t" style="left:1948.10px;top:769.00px;font-size:17.25px;color:#0f2d3b;letter-spacing:0.944px;-webkit-text-stroke:0.1px #0f2d3b;">07:15:25</span>
<span class="t" style="left:2147.40px;top:769.00px;font-size:17.25px;color:#0f2d3b;letter-spacing:0.959px;-webkit-text-stroke:0.1px #0f2d3b;">07:15:55</span>
<div class="b" style="left:864.10px;top:835.30px;width:59.60px;height:39.20px;background:#90b7cb;border-radius:6.5px;border:1.8px solid #1a6a93;box-sizing:border-box;"></div>
<span class="t" style="left:889.15px;top:847.00px;font-size:17.25px;color:#0f2d3b;letter-spacing:1.000px;-webkit-text-stroke:0.28px #0f2d3b;">3</span>
<span class="t" style="left:935.70px;top:847.00px;font-size:17.25px;color:#0f2d3b;letter-spacing:0.964px;-webkit-text-stroke:0.1px #0f2d3b;">Pinewood Lane to Highg…</span>
<svg class="b" style="left:1183.00px;top:850.00px;" width="16" height="10" viewBox="0 0 16 10"><path d="M1.5 1.8L8 8.2L14.5 1.8" fill="none" stroke="#0f2d3b" stroke-width="2" stroke-linecap="round" stroke-linejoin="round"/></svg>
<svg class="b" style="left:1304.00px;top:845.00px;" width="20" height="20" viewBox="0 0 20 20"><rect x="-6" y="-6" width="12" height="12" rx="2" transform="translate(10 10) rotate(45)" fill="none" stroke="#0f2d3b" stroke-width="1.5"/><path d="M6.8 10H13.4" stroke="#0f2d3b" stroke-width="1.6" stroke-linecap="round"/></svg>
<span class="t" style="left:1331.70px;top:847.00px;font-size:17.25px;color:#0f2d3b;letter-spacing:1.906px;-webkit-text-stroke:0.1px #0f2d3b;">No data</span>
<span class="t" style="left:1768.70px;top:847.00px;font-size:17.25px;color:#0f2d3b;letter-spacing:1.247px;-webkit-text-stroke:0.1px #0f2d3b;">07:20</span>
<span class="t" style="left:1948.00px;top:847.00px;font-size:17.25px;color:#0f2d3b;-webkit-text-stroke:0.1px #0f2d3b;transform:scaleX(1.755);transform-origin:0 0;">---</span>
<span class="t" style="left:2147.60px;top:847.00px;font-size:17.25px;color:#0f2d3b;-webkit-text-stroke:0.1px #0f2d3b;transform:scaleX(1.755);transform-origin:0 0;">---</span>
<span class="t" style="left:2370.80px;top:847.00px;font-size:17.25px;color:#0f2d3b;-webkit-text-stroke:0.1px #0f2d3b;transform:scaleX(1.755);transform-origin:0 0;">---</span>
<div class="b" style="left:864.10px;top:913.30px;width:59.60px;height:39.20px;background:#90b7cb;border-radius:6.5px;border:1.8px solid #1a6a93;box-sizing:border-box;"></div>
<span class="t" style="left:883.96px;top:925.00px;font-size:17.25px;color:#0f2d3b;letter-spacing:1.000px;-webkit-text-stroke:0.28px #0f2d3b;">63</span>
<span class="t" style="left:935.70px;top:925.00px;font-size:17.25px;color:#0f2d3b;letter-spacing:1.112px;-webkit-text-stroke:0.1px #0f2d3b;">Ashpool to Northmouth S…</span>
<svg class="b" style="left:1183.00px;top:928.00px;" width="16" height="10" viewBox="0 0 16 10"><path d="M1.5 1.8L8 8.2L14.5 1.8" fill="none" stroke="#0f2d3b" stroke-width="2" stroke-linecap="round" stroke-linejoin="round"/></svg>
<div class="b" style="left:1305.00px;top:924.00px;width:18.00px;height:18.00px;background:#0f2d3b;border-radius:4.5px;"></div>
<span class="t" style="left:1331.70px;top:925.00px;font-size:17.25px;color:#0f2d3b;letter-spacing:2.374px;-webkit-text-stroke:0.1px #0f2d3b;">Matched</span>
<span class="t" style="left:1768.70px;top:925.00px;font-size:17.25px;color:#0f2d3b;letter-spacing:1.247px;-webkit-text-stroke:0.1px #0f2d3b;">07:25</span>
<span class="t" style="left:1948.10px;top:925.00px;font-size:17.25px;color:#0f2d3b;letter-spacing:0.944px;-webkit-text-stroke:0.1px #0f2d3b;">07:25:00</span>
<span class="t" style="left:2147.40px;top:925.00px;font-size:17.25px;color:#0f2d3b;letter-spacing:0.959px;-webkit-text-stroke:0.1px #0f2d3b;">07:25:30</span>
<div class="b" style="left:864.10px;top:991.30px;width:59.60px;height:39.20px;background:#90b7cb;border-radius:6.5px;border:1.8px solid #1a6a93;box-sizing:border-box;"></div>
<span class="t" style="left:883.96px;top:1003.00px;font-size:17.25px;color:#0f2d3b;letter-spacing:1.000px;-webkit-text-stroke:0.28px #0f2d3b;">14</span>
<span class="t" style="left:935.70px;top:1003.00px;font-size:17.25px;color:#0f2d3b;letter-spacing:1.068px;-webkit-text-stroke:0.1px #0f2d3b;">Abbot’s Green to Denton…</span>
<svg class="b" style="left:1183.00px;top:1006.00px;" width="16" height="10" viewBox="0 0 16 10"><path d="M1.5 1.8L8 8.2L14.5 1.8" fill="none" stroke="#0f2d3b" stroke-width="2" stroke-linecap="round" stroke-linejoin="round"/></svg>
<svg class="b" style="left:1305.00px;top:1002.00px;" width="18" height="18" viewBox="0 0 18 18"><defs><clipPath id="pc"><rect x="0.8" y="0.8" width="16.4" height="16.4" rx="3.8"/></clipPath></defs><g clip-path="url(#pc)"><rect x="0" y="0" width="9" height="18" fill="#0f2d3b"/><path d="M8 9L16 -1M8 14.5L19 1M8 20L19 6.5M12 21L20 11.5" stroke="#0f2d3b" stroke-width="2.1"/></g><rect x="0.8" y="0.8" width="16.4" height="16.4" rx="3.8" fill="none" stroke="#0f2d3b" stroke-width="1.6"/></svg>
<span class="t" style="left:1331.70px;top:1003.00px;font-size:17.25px;color:#0f2d3b;letter-spacing:1.532px;-webkit-text-stroke:0.1px #0f2d3b;">Part cancelled</span>
<span class="t" style="left:1768.70px;top:1003.00px;font-size:17.25px;color:#0f2d3b;letter-spacing:1.247px;-webkit-text-stroke:0.1px #0f2d3b;">07:25</span>
<span class="t" style="left:1948.00px;top:1003.00px;font-size:17.25px;color:#0f2d3b;-webkit-text-stroke:0.1px #0f2d3b;transform:scaleX(1.755);transform-origin:0 0;">---</span>
<span class="t" style="left:2147.60px;top:1003.00px;font-size:17.25px;color:#0f2d3b;-webkit-text-stroke:0.1px #0f2d3b;transform:scaleX(1.755);transform-origin:0 0;">---</span>
<div class="b" style="left:864.10px;top:1069.30px;width:59.60px;height:39.20px;background:#90b7cb;border-radius:6.5px;border:1.8px solid #1a6a93;box-sizing:border-box;"></div>
<span class="t" style="left:878.76px;top:1081.00px;font-size:17.25px;color:#0f2d3b;letter-spacing:1.000px;-webkit-text-stroke:0.28px #0f2d3b;">483</span>
<svg class="b" style="left:914.90px;top:1061.60px;" width="17" height="17" viewBox="0 0 17 17"><circle cx="8.5" cy="8.5" r="7.2" fill="#98b6c4" stroke="#507587" stroke-width="1.4"/><path d="M8.5 4.6V8.8L11.3 10.2" fill="none" stroke="#507587" stroke-width="1.3" stroke-linecap="round" stroke-linejoin="round"/></svg>
<span class="t" style="left:935.70px;top:1081.00px;font-size:17.25px;color:#0f2d3b;letter-spacing:1.086px;-webkit-text-stroke:0.1px #0f2d3b;">Redburgh Central to New…</span>
<svg class="b" style="left:1183.00px;top:1084.00px;" width="16" height="10" viewBox="0 0 16 10"><path d="M1.5 1.8L8 8.2L14.5 1.8" fill="none" stroke="#0f2d3b" stroke-width="2" stroke-linecap="round" stroke-linejoin="round"/></svg>
<div class="b" style="left:1305.00px;top:1080.00px;width:18.00px;height:18.00px;background:#0f2d3b;border-radius:4.5px;"></div>
<span class="t" style="left:1331.70px;top:1081.00px;font-size:17.25px;color:#0f2d3b;letter-spacing:2.374px;-webkit-text-stroke:0.1px #0f2d3b;">Matched</span>
<span class="t" style="left:1768.70px;top:1081.00px;font-size:17.25px;color:#0f2d3b;letter-spacing:1.247px;-webkit-text-stroke:0.1px #0f2d3b;">07:30</span>
<span class="t" style="left:1948.10px;top:1081.00px;font-size:17.25px;color:#0f2d3b;letter-spacing:0.944px;-webkit-text-stroke:0.1px #0f2d3b;">07:30:30</span>
<span class="t" style="left:2147.40px;top:1081.00px;font-size:17.25px;color:#0f2d3b;letter-spacing:0.959px;-webkit-text-stroke:0.1px #0f2d3b;">07:31:00</span>
<div class="b" style="left:864.10px;top:1147.30px;width:59.60px;height:39.20px;background:#90b7cb;border-radius:6.5px;border:1.8px solid #1a6a93;box-sizing:border-box;"></div>
<span class="t" style="left:889.15px;top:1159.00px;font-size:17.25px;color:#0f2d3b;letter-spacing:1.000px;-webkit-text-stroke:0.28px #0f2d3b;">3</span>
<span class="t" style="left:935.70px;top:1159.00px;font-size:17.25px;color:#0f2d3b;letter-spacing:1.035px;-webkit-text-stroke:0.1px #0f2d3b;">Oakhurst Village to Middl…</span>
<svg class="b" style="left:1183.00px;top:1162.00px;" width="16" height="10" viewBox="0 0 16 10"><path d="M1.5 1.8L8 8.2L14.5 1.8" fill="none" stroke="#0f2d3b" stroke-width="2" stroke-linecap="round" stroke-linejoin="round"/></svg>
<div class="b" style="left:1305.00px;top:1158.00px;width:18.00px;height:18.00px;background:#0f2d3b;border-radius:4.5px;"></div>
<span class="t" style="left:1331.70px;top:1159.00px;font-size:17.25px;color:#0f2d3b;letter-spacing:2.374px;-webkit-text-stroke:0.1px #0f2d3b;">Matched</span>
<span class="t" style="left:1768.70px;top:1159.00px;font-size:17.25px;color:#0f2d3b;letter-spacing:1.247px;-webkit-text-stroke:0.1px #0f2d3b;">07:30</span>
<span class="t" style="left:1948.10px;top:1159.00px;font-size:17.25px;color:#0f2d3b;letter-spacing:0.944px;-webkit-text-stroke:0.1px #0f2d3b;">07:31:40</span>
<span class="t" style="left:2147.40px;top:1159.00px;font-size:17.25px;color:#0f2d3b;letter-spacing:0.959px;-webkit-text-stroke:0.1px #0f2d3b;">07:32:10</span>
<div class="b" style="left:864.10px;top:1225.30px;width:59.60px;height:39.20px;background:#90b7cb;border-radius:6.5px;border:1.8px solid #1a6a93;box-sizing:border-box;"></div>
<span class="t" style="left:878.76px;top:1237.00px;font-size:17.25px;color:#0f2d3b;letter-spacing:1.000px;-webkit-text-stroke:0.28px #0f2d3b;">483</span>
<svg class="b" style="left:914.90px;top:1217.60px;" width="17" height="17" viewBox="0 0 17 17"><circle cx="8.5" cy="8.5" r="7.2" fill="#98b6c4" stroke="#507587" stroke-width="1.4"/><path d="M8.5 4.6V8.8L11.3 10.2" fill="none" stroke="#507587" stroke-width="1.3" stroke-linecap="round" stroke-linejoin="round"/></svg>
<span class="t" style="left:935.70px;top:1237.00px;font-size:17.25px;color:#0f2d3b;letter-spacing:0.713px;-webkit-text-stroke:0.1px #0f2d3b;">Eastfield Lane to Riversid…</span>
<svg class="b" style="left:1183.00px;top:1240.00px;" width="16" height="10" viewBox="0 0 16 10"><path d="M1.5 1.8L8 8.2L14.5 1.8" fill="none" stroke="#0f2d3b" stroke-width="2" stroke-linecap="round" stroke-linejoin="round"/></svg>
<svg class="b" style="left:1304.00px;top:1235.00px;" width="20" height="20" viewBox="0 0 20 20"><circle cx="10" cy="10" r="8" fill="none" stroke="#0f2d3b" stroke-width="1.6"/><path d="M4.6 15.4L15.4 4.6" stroke="#0f2d3b" stroke-width="1.6"/></svg>
<span class="t" style="left:1331.70px;top:1237.00px;font-size:17.25px;color:#0f2d3b;letter-spacing:1.953px;-webkit-text-stroke:0.1px #0f2d3b;">Cancelled</span>
<span class="t" style="left:1768.70px;top:1237.00px;font-size:17.25px;color:#0f2d3b;letter-spacing:1.247px;-webkit-text-stroke:0.1px #0f2d3b;">07:40</span>
<span class="t" style="left:1948.00px;top:1237.00px;font-size:17.25px;color:#0f2d3b;-webkit-text-stroke:0.1px #0f2d3b;transform:scaleX(1.755);transform-origin:0 0;">---</span>
<span class="t" style="left:2147.60px;top:1237.00px;font-size:17.25px;color:#0f2d3b;-webkit-text-stroke:0.1px #0f2d3b;transform:scaleX(1.755);transform-origin:0 0;">---</span>
<span class="t" style="left:2370.80px;top:1237.00px;font-size:17.25px;color:#0f2d3b;-webkit-text-stroke:0.1px #0f2d3b;transform:scaleX(1.755);transform-origin:0 0;">---</span>
<div class="b" style="left:864.10px;top:1303.30px;width:59.60px;height:39.20px;background:#90b7cb;border-radius:6.5px;border:1.8px solid #1a6a93;box-sizing:border-box;"></div>
<span class="t" style="left:883.96px;top:1315.00px;font-size:17.25px;color:#0f2d3b;letter-spacing:1.000px;-webkit-text-stroke:0.28px #0f2d3b;">93</span>
<svg class="b" style="left:914.90px;top:1295.60px;" width="17" height="17" viewBox="0 0 17 17"><circle cx="8.5" cy="8.5" r="7.2" fill="#98b6c4" stroke="#507587" stroke-width="1.4"/><path d="M8.5 4.6V8.8L11.3 10.2" fill="none" stroke="#507587" stroke-width="1.3" stroke-linecap="round" stroke-linejoin="round"/></svg>
<span class="t" style="left:935.70px;top:1315.00px;font-size:17.25px;color:#0f2d3b;letter-spacing:1.027px;-webkit-text-stroke:0.1px #0f2d3b;">Birchwood Central to Birc…</span>
<svg class="b" style="left:1183.00px;top:1318.00px;" width="16" height="10" viewBox="0 0 16 10"><path d="M1.5 1.8L8 8.2L14.5 1.8" fill="none" stroke="#0f2d3b" stroke-width="2" stroke-linecap="round" stroke-linejoin="round"/></svg>
<div class="b" style="left:1305.00px;top:1314.00px;width:18.00px;height:18.00px;background:#0f2d3b;border-radius:4.5px;"></div>
<span class="t" style="left:1331.70px;top:1315.00px;font-size:17.25px;color:#0f2d3b;letter-spacing:2.374px;-webkit-text-stroke:0.1px #0f2d3b;">Matched</span>
<span class="t" style="left:1768.70px;top:1315.00px;font-size:17.25px;color:#0f2d3b;letter-spacing:1.247px;-webkit-text-stroke:0.1px #0f2d3b;">07:40</span>
<span class="t" style="left:1948.10px;top:1315.00px;font-size:17.25px;color:#0f2d3b;letter-spacing:0.944px;-webkit-text-stroke:0.1px #0f2d3b;">07:46:25</span>
<span class="t" style="left:2147.40px;top:1315.00px;font-size:17.25px;color:#0f2d3b;letter-spacing:0.959px;-webkit-text-stroke:0.1px #0f2d3b;">07:46:55</span>
<div class="b" style="left:864.10px;top:1381.30px;width:59.60px;height:39.20px;background:#90b7cb;border-radius:6.5px;border:1.8px solid #1a6a93;box-sizing:border-box;"></div>
<span class="t" style="left:883.96px;top:1393.00px;font-size:17.25px;color:#0f2d3b;letter-spacing:1.000px;-webkit-text-stroke:0.28px #0f2d3b;">63</span>
<span class="t" style="left:935.70px;top:1393.00px;font-size:17.25px;color:#0f2d3b;letter-spacing:1.112px;-webkit-text-stroke:0.1px #0f2d3b;">Ashpool to Northmouth S…</span>
<svg class="b" style="left:1183.00px;top:1396.00px;" width="16" height="10" viewBox="0 0 16 10"><path d="M1.5 1.8L8 8.2L14.5 1.8" fill="none" stroke="#0f2d3b" stroke-width="2" stroke-linecap="round" stroke-linejoin="round"/></svg>
<div class="b" style="left:1305.00px;top:1392.00px;width:18.00px;height:18.00px;background:#0f2d3b;border-radius:4.5px;"></div>
<span class="t" style="left:1331.70px;top:1393.00px;font-size:17.25px;color:#0f2d3b;letter-spacing:2.374px;-webkit-text-stroke:0.1px #0f2d3b;">Matched</span>
<span class="t" style="left:1768.70px;top:1393.00px;font-size:17.25px;color:#0f2d3b;letter-spacing:1.247px;-webkit-text-stroke:0.1px #0f2d3b;">07:45</span>
<span class="t" style="left:1948.10px;top:1393.00px;font-size:17.25px;color:#0f2d3b;letter-spacing:0.944px;-webkit-text-stroke:0.1px #0f2d3b;">07:42:10</span>
<span class="t" style="left:2147.40px;top:1393.00px;font-size:17.25px;color:#0f2d3b;letter-spacing:0.959px;-webkit-text-stroke:0.1px #0f2d3b;">07:42:20</span>
<div class="b" style="left:864.10px;top:1459.30px;width:59.60px;height:39.20px;background:#90b7cb;border-radius:6.5px;border:1.8px solid #1a6a93;box-sizing:border-box;"></div>
<span class="t" style="left:883.96px;top:1471.00px;font-size:17.25px;color:#0f2d3b;letter-spacing:1.000px;-webkit-text-stroke:0.28px #0f2d3b;">14</span>
<svg class="b" style="left:914.90px;top:1451.60px;" width="17" height="17" viewBox="0 0 17 17"><circle cx="8.5" cy="8.5" r="7.2" fill="#98b6c4" stroke="#507587" stroke-width="1.4"/><path d="M8.5 4.6V8.8L11.3 10.2" fill="none" stroke="#507587" stroke-width="1.3" stroke-linecap="round" stroke-linejoin="round"/></svg>
<span class="t" style="left:935.70px;top:1471.00px;font-size:17.25px;color:#0f2d3b;letter-spacing:1.068px;-webkit-text-stroke:0.1px #0f2d3b;">Abbot’s Green to Denton…</span>
<svg class="b" style="left:1183.00px;top:1474.00px;" width="16" height="10" viewBox="0 0 16 10"><path d="M1.5 1.8L8 8.2L14.5 1.8" fill="none" stroke="#0f2d3b" stroke-width="2" stroke-linecap="round" stroke-linejoin="round"/></svg>
<div class="b" style="left:1305.00px;top:1470.00px;width:18.00px;height:18.00px;background:#0f2d3b;border-radius:4.5px;"></div>
<span class="t" style="left:1331.70px;top:1471.00px;font-size:17.25px;color:#0f2d3b;letter-spacing:2.374px;-webkit-text-stroke:0.1px #0f2d3b;">Matched</span>
<span class="t" style="left:1768.70px;top:1471.00px;font-size:17.25px;color:#0f2d3b;letter-spacing:1.247px;-webkit-text-stroke:0.1px #0f2d3b;">07:55</span>
<span class="t" style="left:1948.10px;top:1471.00px;font-size:17.25px;color:#0f2d3b;letter-spacing:0.944px;-webkit-text-stroke:0.1px #0f2d3b;">07:55:05</span>
<span class="t" style="left:2147.40px;top:1471.00px;font-size:17.25px;color:#0f2d3b;letter-spacing:0.959px;-webkit-text-stroke:0.1px #0f2d3b;">07:55:45</span>
<div class="b" style="left:864.10px;top:1537.30px;width:59.60px;height:39.20px;background:#90b7cb;border-radius:6.5px;border:1.8px solid #1a6a93;box-sizing:border-box;"></div>
<span class="t" style="left:889.15px;top:1549.00px;font-size:17.25px;color:#0f2d3b;letter-spacing:1.000px;-webkit-text-stroke:0.28px #0f2d3b;">3</span>
<span class="t" style="left:935.70px;top:1549.00px;font-size:17.25px;color:#0f2d3b;letter-spacing:0.964px;-webkit-text-stroke:0.1px #0f2d3b;">Pinewood Lane to Highg…</span>
<svg class="b" style="left:1183.00px;top:1552.00px;" width="16" height="10" viewBox="0 0 16 10"><path d="M1.5 1.8L8 8.2L14.5 1.8" fill="none" stroke="#0f2d3b" stroke-width="2" stroke-linecap="round" stroke-linejoin="round"/></svg>
<div class="b" style="left:1305.00px;top:1548.00px;width:18.00px;height:18.00px;background:#0f2d3b;border-radius:4.5px;"></div>
<span class="t" style="left:1331.70px;top:1549.00px;font-size:17.25px;color:#0f2d3b;letter-spacing:2.374px;-webkit-text-stroke:0.1px #0f2d3b;">Matched</span>
<span class="t" style="left:1768.70px;top:1549.00px;font-size:17.25px;color:#0f2d3b;letter-spacing:1.247px;-webkit-text-stroke:0.1px #0f2d3b;">07:55</span>
<span class="t" style="left:1948.10px;top:1549.00px;font-size:17.25px;color:#0f2d3b;letter-spacing:0.944px;-webkit-text-stroke:0.1px #0f2d3b;">07:55:10</span>
<span class="t" style="left:2147.40px;top:1549.00px;font-size:17.25px;color:#0f2d3b;letter-spacing:0.959px;-webkit-text-stroke:0.1px #0f2d3b;">07:56:15</span>
<svg class="b" style="left:839.00px;top:1625.40px;" width="15" height="9" viewBox="0 0 15 9"><path d="M0.4 0.6H14.2L7.3 8.6Z" fill="#426373"/></svg>
<span class="t" style="left:863.80px;top:1618.00px;font-size:22.00px;color:#0f2d3b;letter-spacing:1.326px;-webkit-text-stroke:0.44px #0f2d3b;">08:00 - 08:59</span>
<span class="t" style="left:1036.40px;top:1620.00px;font-size:19.00px;color:#3f6171;letter-spacing:0.263px;-webkit-text-stroke:0.1px #3f6171;">5 Services</span>
<div class="b" style="left:1139.30px;top:1617.40px;width:1.50px;height:24.00px;background:#6f909f;"></div>
<span class="t" style="left:1151.60px;top:1620.00px;font-size:19.00px;color:#3f6171;letter-spacing:-0.636px;-webkit-text-stroke:0.1px #3f6171;">12/14 visits</span>
<div class="b" style="left:783.70px;top:597.00px;width:480.20px;height:455.50px;background:#f4fbff;border-radius:9px;border:1.5px solid #d3edfa;box-sizing:border-box;box-shadow:0 10px 18px -4px rgba(15,45,59,0.25),0 0 5px rgba(15,45,59,0.08);"></div>
<span class="t" style="left:812.60px;top:630.00px;font-size:14.25px;color:#1a709c;letter-spacing:0.501px;-webkit-text-stroke:0.24px #1a709c;">VISIT DETAILS</span>
<span class="t" style="left:812.60px;top:666.00px;font-size:19.00px;color:#1c1c1c;letter-spacing:0.555px;-webkit-text-stroke:0.1px #1c1c1c;">Stop order:</span>
<span class="t" style="left:956.70px;top:665.00px;font-size:19.00px;color:#1c1c1c;letter-spacing:1.945px;-webkit-text-stroke:0.1px #1c1c1c;">5/7</span>
<span class="t" style="left:812.60px;top:706.00px;font-size:19.00px;color:#1c1c1c;letter-spacing:0.795px;-webkit-text-stroke:0.1px #1c1c1c;">Stop attribute:</span>
<svg class="b" style="left:958.80px;top:705.80px;" width="20" height="20" viewBox="0 0 20 20"><circle cx="10" cy="10" r="8.3" fill="none" stroke="#707070" stroke-width="1.5"/><path d="M10 5.4V10.4L13.2 11.8" fill="none" stroke="#707070" stroke-width="1.5" stroke-linecap="round" stroke-linejoin="round"/></svg>
<span class="t" style="left:986.60px;top:706.00px;font-size:19.00px;color:#1c1c1c;letter-spacing:0.865px;-webkit-text-stroke:0.1px #1c1c1c;">Timing point</span>
<div class="b" style="left:813.50px;top:758.20px;width:419.30px;height:1.50px;background:#c5e6f6;"></div>
<span class="t" style="left:812.60px;top:792.00px;font-size:14.25px;color:#1a709c;letter-spacing:0.478px;-webkit-text-stroke:0.24px #1a709c;">JOURNEY DETAILS</span>
<span class="t" style="left:812.60px;top:828.00px;font-size:19.00px;color:#1c1c1c;letter-spacing:0.316px;-webkit-text-stroke:0.1px #1c1c1c;">Service:</span>
<span class="t" style="left:956.70px;top:828.00px;font-size:19.00px;color:#1c1c1c;letter-spacing:0.661px;-webkit-text-stroke:0.1px #1c1c1c;">483 - Redburgh Central to</span>
<span class="t" style="left:956.70px;top:855.00px;font-size:19.00px;color:#1c1c1c;letter-spacing:0.523px;-webkit-text-stroke:0.1px #1c1c1c;">Newcaster Town Hall</span>
<span class="t" style="left:812.60px;top:894.00px;font-size:19.00px;color:#1c1c1c;letter-spacing:0.967px;-webkit-text-stroke:0.1px #1c1c1c;">Variant:</span>
<span class="t" style="left:956.70px;top:894.00px;font-size:19.00px;color:#1c1c1c;letter-spacing:0.661px;-webkit-text-stroke:0.1px #1c1c1c;">483 - Redburgh Central to</span>
<span class="t" style="left:956.70px;top:921.00px;font-size:19.00px;color:#1c1c1c;letter-spacing:0.523px;-webkit-text-stroke:0.1px #1c1c1c;">Newcaster Town Hall</span>
<span class="t" style="left:812.60px;top:960.00px;font-size:19.00px;color:#1c1c1c;letter-spacing:0.928px;-webkit-text-stroke:0.1px #1c1c1c;">Operator:</span>
<span class="t" style="left:956.70px;top:960.00px;font-size:19.00px;color:#1c1c1c;letter-spacing:0.445px;-webkit-text-stroke:0.1px #1c1c1c;">Oxley Bus Company</span>
<span class="t" style="left:812.60px;top:999.00px;font-size:19.00px;color:#1c1c1c;letter-spacing:0.636px;-webkit-text-stroke:0.1px #1c1c1c;">Direction:</span>
<span class="t" style="left:956.70px;top:999.00px;font-size:19.00px;color:#1c1c1c;letter-spacing:1.069px;-webkit-text-stroke:0.1px #1c1c1c;">Inbound</span>
<svg class="b" style="left:981.30px;top:1156.80px;" width="25" height="27" viewBox="0 0 25 27"><g transform="translate(1 1)"><path d="M6.1 0.7C7.4 0.3 8.4 1.2 8.7 2.4L10.4 7.6C11.2 6.200 13.200 6 13.800 7.500C14.600 6.600 16.800 6.600 17.500 8.300C18.600 7.800 20.600 8.300 21 10.200C21.600 12.500 21.400 15.500 20.400 18L18 23.200L8.600 23.600L1.200 13.600C0.200 12.200 0.800 10.600 2.200 10.800C3.400 11 4.600 12 5.600 13.200L6 11.600L4.400 3C4.200 1.800 4.900 0.900 6.100 0.700Z" fill="#fff" stroke="#0a0a0a" stroke-width="1.5" stroke-linejoin="round" style="filter:drop-shadow(0 1.2px 1px rgba(0,0,0,0.35))"/><path d="M10.700 14.300V19.600M13.900 14.300V19.600M17.100 14.300V19.600" stroke="#0a0a0a" stroke-width="1.3"/></g></svg>
</div>
<div class="b" style="left:90.00px;top:406.30px;width:695.70px;height:3.20px;background:#ec9a39;border-radius:2px;"></div>
<div class="b" style="left:-0.20px;top:359.60px;width:96.40px;height:96.40px;background:#e9983a;border-radius:50px;"></div>
<span class="t" style="left:31.37px;top:384.00px;font-size:49.00px;color:#fff;font-weight:700;">1</span>
<div class="b" style="left:90.00px;top:718.40px;width:699.00px;height:3.20px;background:#ec9a39;border-radius:2px;"></div>
<div class="b" style="left:-0.20px;top:671.80px;width:96.40px;height:96.40px;background:#e9983a;border-radius:50px;"></div>
<span class="t" style="left:34.37px;top:696.00px;font-size:49.00px;color:#fff;font-weight:700;">2</span>
<div class="b" style="left:2354.00px;top:404.90px;width:146.00px;height:3.20px;background:#ec9a39;border-radius:2px;"></div>
<div class="b" style="left:2495.50px;top:357.90px;width:96.40px;height:96.40px;background:#e9983a;border-radius:50px;"></div>
<span class="t" style="left:2530.07px;top:382.00px;font-size:49.00px;color:#fff;font-weight:700;">3</span>
</body></html>
